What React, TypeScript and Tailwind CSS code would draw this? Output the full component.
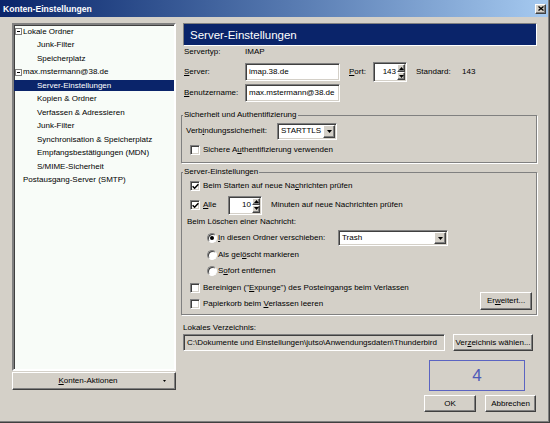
import React from 'react';

const sunken =
  'border border-t-[#808080] border-l-[#808080] border-b-white border-r-white shadow-[inset_1px_1px_0_#404040,inset_-1px_-1px_0_#d4d0c8]';
const raised =
  'border border-t-white border-l-white border-b-[#404040] border-r-[#404040] shadow-[inset_-1px_-1px_0_#808080]';

const Acc: React.FC<{ children: React.ReactNode }> = ({ children }) => <u className="underline">{children}</u>;

const Tri: React.FC<{ up?: boolean; size?: number }> = ({ up, size = 5 }) => (
  <svg width={size} height={Math.ceil(size / 2)} viewBox={`0 0 ${size} ${Math.ceil(size / 2)}`}>
    {up ? (
      <polygon points={`0,${Math.ceil(size / 2)} ${size},${Math.ceil(size / 2)} ${size / 2},0`} fill="#000" />
    ) : (
      <polygon points={`0,0 ${size},0 ${size / 2},${Math.ceil(size / 2)}`} fill="#000" />
    )}
  </svg>
);

const Checkbox: React.FC<{ checked?: boolean }> = ({ checked }) => (
  <span className={`w-[10px] h-[10px] bg-white flex items-center justify-center shrink-0 ${sunken}`}>
    {checked && (
      <svg width="7" height="7" viewBox="0 0 7 7">
        <path d="M0.6 3.2 L2.6 5.2 L6.4 1.2" stroke="#000" strokeWidth="1.5" fill="none" />
      </svg>
    )}
  </span>
);

const Radio: React.FC<{ checked?: boolean }> = ({ checked }) => (
  <span
    className={`w-[10px] h-[10px] rounded-full bg-white flex items-center justify-center shrink-0 border border-t-[#808080] border-l-[#808080] border-b-white border-r-white shadow-[inset_1px_1px_0_#404040]`}
  >
    {checked && <span className="w-[4px] h-[4px] rounded-full bg-black" />}
  </span>
);

const Spinner: React.FC<{ value: string; className: string }> = ({ value, className }) => (
  <div className={`flex bg-white ${sunken} ${className}`}>
    <div className="flex-1 flex items-center justify-end pr-[1px]">{value}</div>
    <div className="flex flex-col w-[9px] py-[1px] pr-[1px]">
      <div className={`flex-1 bg-[#d4d0c8] flex items-center justify-center ${raised}`}>
        <Tri up size={5} />
      </div>
      <div className={`flex-1 bg-[#d4d0c8] flex items-center justify-center ${raised}`}>
        <Tri size={5} />
      </div>
    </div>
  </div>
);

const Select: React.FC<{ value: string; className: string }> = ({ value, className }) => (
  <div className={`flex bg-white ${sunken} ${className}`}>
    <div className="flex-1 flex items-center pl-[3px]">{value}</div>
    <div className={`w-[12px] my-[1px] mr-[1px] bg-[#d4d0c8] flex items-center justify-center ${raised}`}>
      <Tri size={5} />
    </div>
  </div>
);

const Btn: React.FC<{ children: React.ReactNode; className: string }> = ({ children, className }) => (
  <button type="button" className={`flex items-center justify-center bg-[#d4d0c8] ${raised} ${className}`}>
    {children}
  </button>
);

const tree = [
  { label: 'Lokale Ordner', level: 0, box: true },
  { label: 'Junk-Filter', level: 1 },
  { label: 'Speicherplatz', level: 1 },
  { label: 'max.mstermann@38.de', level: 0, box: true },
  { label: 'Server-Einstellungen', level: 1, selected: true },
  { label: 'Kopien & Ordner', level: 1 },
  { label: 'Verfassen & Adressieren', level: 1 },
  { label: 'Junk-Filter', level: 1 },
  { label: 'Synchronisation & Speicherplatz', level: 1 },
  { label: 'Empfangsbestätigungen (MDN)', level: 1 },
  { label: 'S/MIME-Sicherheit', level: 1 },
  { label: 'Postausgang-Server (SMTP)', level: 0 },
];

export default function App() {
  return (
    <div className="w-[550px] h-[423px] bg-[#d4d0c8] font-['Liberation_Sans',Arial,sans-serif] text-[8px] leading-[10px] text-black border-r border-b border-[#404040] shadow-[inset_-1px_-1px_0_#808080] overflow-hidden">
      {/* title bar */}
      <div className="h-[17px] mr-[1px] bg-linear-to-r from-[#0a246a] to-[#a6caf0] flex items-center justify-between pl-[3px] pr-[2px]">
        <span className="text-white font-bold text-[8.6px]">Konten-Einstellungen</span>
        <button type="button" className={`w-[11px] h-[10px] bg-[#d4d0c8] flex items-center justify-center ${raised}`}>
          <svg width="6" height="5" viewBox="0 0 6 5">
            <path d="M0.5 0.5 L5.5 4.5 M5.5 0.5 L0.5 4.5" stroke="#000" strokeWidth="1.3" />
          </svg>
        </button>
      </div>

      <div className="flex pt-[6px]">
        {/* left: account tree */}
        <div className="ml-[12px] w-[164px] flex flex-col">
          <div className={`h-[348px] bg-[#f8fcf8] border-2 border-t-[#808080] border-l-[#808080] border-b-white border-r-white shadow-[inset_1px_1px_0_#404040]`}>
            {tree.map((item, i) => (
              <div key={i} className="h-[13.5px] flex items-center">
                <div
                  className={`h-[11px] w-full flex items-center gap-[1px] ${
                    item.selected ? 'bg-[#0a246a] text-white' : ''
                  } ${item.level === 1 ? 'pl-[23px]' : item.box ? 'pl-[1px]' : 'pl-[9px]'}`}
                >
                  {item.box && (
                    <span className="w-[7px] h-[7px] border border-[#808080] bg-white flex items-center justify-center">
                      <span className="w-[3px] h-[1px] bg-black" />
                    </span>
                  )}
                  <span>{item.label}</span>
                </div>
              </div>
            ))}
          </div>
          <Btn className="mt-[1px] h-[18px] w-full relative pr-[12px]">
            <span>
              <Acc>K</Acc>onten-Aktionen
            </span>
            <span className="absolute right-[9px] top-[7px]">
              <svg width="3" height="2" viewBox="0 0 3 2">
                <polygon points="0,0 3,0 1.5,2" fill="#000" />
              </svg>
            </span>
          </Btn>
        </div>

        {/* right: server settings */}
        <div className="ml-[5px] w-[356px] flex flex-col">
          <div className="ml-[2px] h-[23px] bg-[#0a246a] border border-t-[#808080] border-l-[#808080] border-b-white border-r-white flex items-center pl-[6px] text-white text-[11.5px]">
            Server-Einstellungen
          </div>

          <div className="h-[12px] flex items-center pl-[3px]">
            <span className="w-[61px]">Servertyp:</span>
            <span>IMAP</span>
          </div>

          <div className="mt-[5px] h-[18px] flex items-center pl-[3px]">
            <span className="w-[61px]">
              <Acc>S</Acc>erver:
            </span>
            <div className={`w-[95px] h-[18px] bg-white flex items-center pl-[3px] ${sunken}`}>imap.38.de</div>
            <span className="ml-[9px] w-[24px]">
              <Acc>P</Acc>ort:
            </span>
            <Spinner value="143" className="w-[34px] h-[20px]" />
            <span className="ml-[9px] w-[46px]">Standard:</span>
            <span>143</span>
          </div>

          <div className="mt-[3px] h-[18px] flex items-center pl-[3px]">
            <span className="w-[61px]">
              <Acc>B</Acc>enutzername:
            </span>
            <div className={`w-[95px] h-[18px] bg-white flex items-center pl-[3px] whitespace-nowrap overflow-hidden ${sunken}`}>
              max.mstermann@38.de
            </div>
          </div>

          <fieldset className="mt-[8px] border border-[#808080] shadow-[1px_1px_0_#fff] pb-[6px]">
            <legend className="ml-[1px] px-[1px] leading-[10px]">Sicherheit und Authentifizierung</legend>
            <div className="mt-[2px] h-[18px] flex items-center pl-[4px]">
              <span className="w-[91px]">
                Verb<Acc>i</Acc>ndungssicherheit:
              </span>
              <Select value="STARTTLS" className="w-[60px] h-[17px]" />
            </div>
            <div className="mt-[4px] h-[12px] flex items-center pl-[8px] gap-[3px]">
              <Checkbox />
              <span>
                Sichere A<Acc>u</Acc>thentifizierung verwenden
              </span>
            </div>
          </fieldset>

          <fieldset className="mt-[4px] border border-[#808080] shadow-[1px_1px_0_#fff] pb-[4px]">
            <legend className="ml-[1px] px-[1px] leading-[10px]">Server-Einstellungen</legend>
            <div className="mt-[3px] h-[12px] flex items-center pl-[8px] gap-[3px]">
              <Checkbox checked />
              <span>
                Beim Starten auf neue Na<Acc>c</Acc>hrichten prüfen
              </span>
            </div>
            <div className="mt-[3px] h-[20px] flex items-center pl-[8px]">
              <Checkbox checked />
              <span className="ml-[3px] w-[25px]">
                <Acc>A</Acc>lle
              </span>
              <Spinner value="10" className="w-[34px] h-[19px]" />
              <span className="ml-[9px]">Minuten auf neue Nachrichten prüfen</span>
            </div>
            <div className="mt-[1px] h-[12px] flex items-center pl-[5px]">Beim Löschen einer Nachricht:</div>
            <div className="mt-[2px] h-[16px] flex items-center pl-[25px]">
              <Radio checked />
              <span className="ml-[1px] w-[120px]">
                <Acc>I</Acc>n diesen Ordner verschieben:
              </span>
              <Select value="Trash" className="w-[110px] h-[16px]" />
            </div>
            <div className="mt-[3px] h-[12px] flex items-center pl-[25px] gap-[1px]">
              <Radio />
              <span>
                Als gel<Acc>ö</Acc>scht markieren
              </span>
            </div>
            <div className="mt-[4px] h-[12px] flex items-center pl-[25px] gap-[1px]">
              <Radio />
              <span>
                S<Acc>o</Acc>fort entfernen
              </span>
            </div>
            <div className="flex items-end justify-between pr-[4px]">
              <div className="flex flex-col pl-[8px]">
                <div className="mt-[5px] h-[12px] flex items-center gap-[3px]">
                  <Checkbox />
                  <span>
                    Bereinigen ("<Acc>E</Acc>xpunge") des Posteingangs beim Verlassen
                  </span>
                </div>
                <div className="mt-[4px] h-[12px] flex items-center gap-[3px]">
                  <Checkbox />
                  <span>
                    Papierkorb beim <Acc>V</Acc>erlassen leeren
                  </span>
                </div>
              </div>
              <Btn className="w-[52px] h-[18px]">
                <span>
                  Er<Acc>w</Acc>eitert...
                </span>
              </Btn>
            </div>
          </fieldset>

          <div className="mt-[7px] h-[12px] flex items-center pl-[2px]">Lokales Verzeichnis:</div>
          <div className="h-[17px] flex items-center">
            <div className={`ml-[2px] w-[262px] h-[17px] bg-[#d4d0c8] flex items-center pl-[3px] whitespace-nowrap overflow-hidden ${sunken}`}>
              {'C:\\Dokumente und Einstellungen\\jutso\\Anwendungsdaten\\Thunderbird'}
            </div>
            <Btn className="ml-[8px] w-[80px] h-[17px]">
              <span>
                Ver<Acc>z</Acc>eichnis wählen...
              </span>
            </Btn>
          </div>

          <div className="self-end mr-[12px] mt-[9px] w-[96px] h-[31px] border border-[#5b64c2] flex items-center justify-center text-[17px] leading-none text-[#4d59b8]">
            4
          </div>

          <div className="self-end mr-[1px] mt-[4px] flex gap-[9px]">
            <Btn className="w-[52px] h-[17px]">OK</Btn>
            <Btn className="w-[51px] h-[17px]">Abbrechen</Btn>
          </div>
        </div>
      </div>
    </div>
  );
}
